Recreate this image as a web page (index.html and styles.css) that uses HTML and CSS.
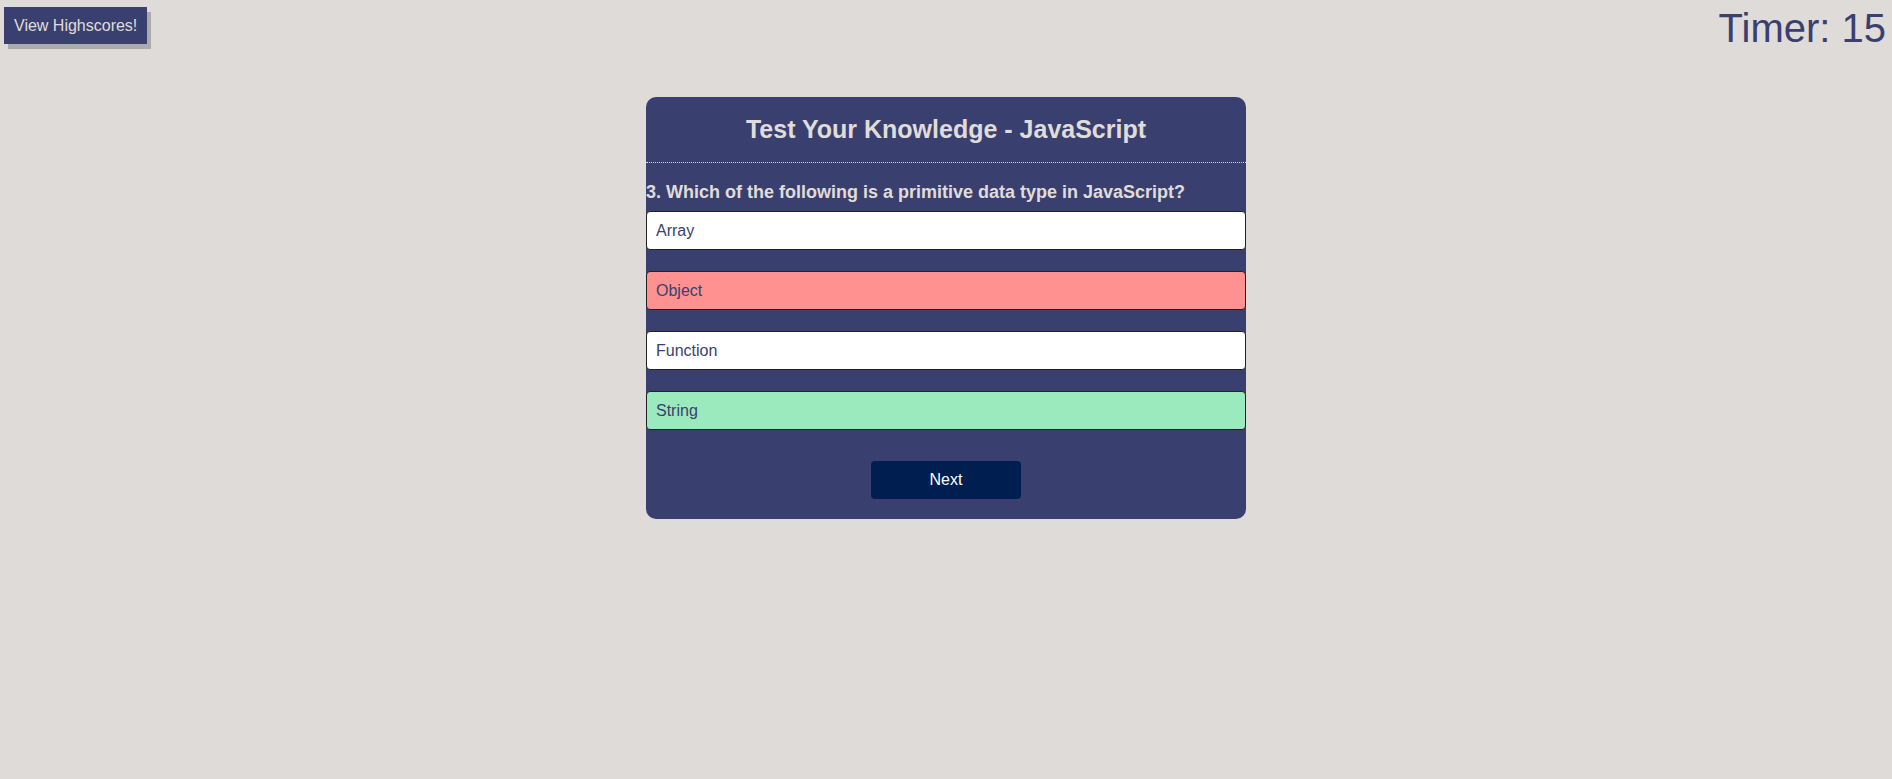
FILE: index.html
```html
<!DOCTYPE html>
<html lang="en">
<head>
<meta charset="UTF-8">
<title>Code Quiz</title>
<link rel="stylesheet" href="styles.css">
</head>
<body>
<header class="topbar">
  <button class="highscores-btn">View Highscores!</button>
  <div class="timer">Timer: 15</div>
</header>
<main class="quiz-card">
  <div class="quiz-header">
    <h2 class="quiz-title">Test Your Knowledge - JavaScript</h2>
  </div>
  <h3 class="question">3. Which of the following is a primitive data type in JavaScript?</h3>
  <div class="answers">
    <button class="answer">Array</button>
    <button class="answer wrong">Object</button>
    <button class="answer">Function</button>
    <button class="answer correct">String</button>
  </div>
  <div class="actions">
    <button class="next-btn">Next</button>
  </div>
</main>
</body>
</html>
```

FILE: styles.css
```css
html, body {
  margin: 0;
  padding: 0;
}

body {
  background: #dfdbd8;
  font-family: "Liberation Sans", Arial, sans-serif;
  color: #394070;
  min-height: 779px;
}

.topbar {
  display: flex;
  justify-content: space-between;
  align-items: flex-start;
}

.highscores-btn {
  margin: 7px 0 0 4px;
  height: 37px;
  padding: 0 10px;
  border: none;
  border-radius: 0;
  background: #394070;
  color: #e0dcd9;
  font-family: inherit;
  font-size: 16px;
  box-shadow: 4px 5px 0 #ababab;
  cursor: pointer;
}

.timer {
  margin: 5px 6px 0 0;
  font-size: 40px;
  line-height: 46px;
  color: #394070;
}

.quiz-card {
  width: 600px;
  margin: 46px auto 0;
  background: #394070;
  border-radius: 10px;
  padding-bottom: 20px;
}

.quiz-header {
  height: 65px;
  display: flex;
  align-items: center;
  justify-content: center;
  border-bottom: 1px dotted #d8d5d8;
}

.quiz-title {
  margin: 0;
  font-size: 25px;
  font-weight: bold;
  color: #e0dcd9;
}

.question {
  margin: 19px 0 8px;
  font-size: 18px;
  line-height: 21px;
  font-weight: bold;
  color: #e0dcd9;
}

.answers {
  display: flex;
  flex-direction: column;
  gap: 21px;
}

.answer {
  display: block;
  width: 100%;
  box-sizing: border-box;
  text-align: left;
  padding: 9px 9px;
  line-height: 19px;
  font-family: inherit;
  font-size: 16px;
  color: #394070;
  background: #ffffff;
  border: 1px solid #222222;
  border-radius: 4px;
  cursor: pointer;
}

.answer.wrong {
  background: #ff9191;
}

.answer.correct {
  background: #9beabd;
}

.actions {
  display: flex;
  justify-content: center;
  margin-top: 31px;
}

.next-btn {
  width: 150px;
  height: 38px;
  border: none;
  border-radius: 4px;
  background: #001e4f;
  color: #ffffff;
  font-family: inherit;
  font-size: 16px;
  cursor: pointer;
}
```
